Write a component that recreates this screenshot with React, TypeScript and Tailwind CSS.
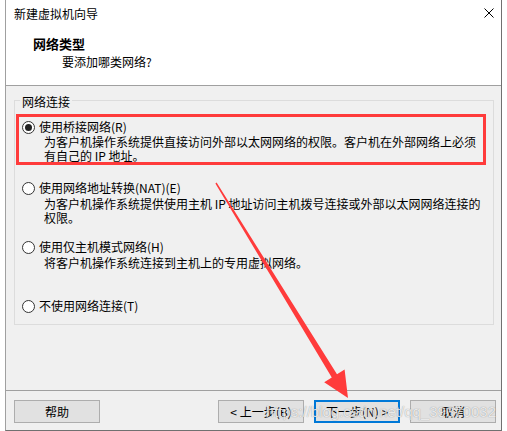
import React from 'react';

const Radio = ({ checked }: { checked?: boolean }) => (
  <span className="w-[13px] h-[13px] rounded-full border border-[#333333] bg-white flex items-center justify-center shrink-0">
    {checked && <span className="w-[7px] h-[7px] rounded-full bg-[#222222]" />}
  </span>
);

interface OptionProps {
  label: string;
  lines?: string[];
  checked?: boolean;
  tight?: boolean;
}

const Option = ({ label, lines, checked, tight }: OptionProps) => (
  <div>
    <div className="flex items-center h-[16px] leading-[16px]">
      <Radio checked={checked} />
      <span className="ml-[4px] whitespace-nowrap">{label}</span>
    </div>
    {lines && (
      <div className={tight ? 'pl-[22px] leading-[14px] whitespace-nowrap' : 'mt-[1px] pl-[22px] leading-[14px] whitespace-nowrap'}>
        {lines.map((l) => (
          <div key={l}>{l}</div>
        ))}
      </div>
    )}
  </div>
);

const WinButton = ({ children, primary }: { children: React.ReactNode; primary?: boolean }) => (
  <button
    className={
      primary
        ? 'w-[86px] h-[23px] bg-[#e1e1e1] border-2 border-[#0078d7] text-[12px] leading-[16px] text-black'
        : 'w-[86px] h-[23px] bg-[#e1e1e1] border border-[#adadad] text-[12px] leading-[16px] text-black'
    }
  >
    {children}
  </button>
);

export default function App() {
  return (
    <div className="relative w-[507px] h-[431px] bg-white overflow-hidden font-['Noto_Sans_CJK_SC',sans-serif] text-[12px] text-black">
      <div className="ml-[5px] w-[497px] h-[431px] flex flex-col bg-[#f0f0f0] border-l border-r border-b border-l-[#a0a0a0] border-r-[#707070] border-b-[#707070]">
        {/* en-tête */}
        <div className="h-[86px] bg-white border-b border-[#a0a0a0] shrink-0">
          <div className="h-[28px] flex items-center justify-between pl-[8px] pr-[7px]">
            <span className="leading-[16px]">新建虚拟机向导</span>
            <svg width="10" height="10" viewBox="0 0 10 10" className="mb-[2px]">
              <path d="M0.5 0.5 L9.5 9.5 M9.5 0.5 L0.5 9.5" stroke="#000" strokeWidth="1" fill="none" />
            </svg>
          </div>
          <div className="mt-[8px] pl-[27px] text-[13px] font-bold leading-[16px]">网络类型</div>
          <div className="mt-[2px] pl-[56px] leading-[16px]">要添加哪类网络?</div>
        </div>

        {/* contenu */}
        <div className="flex-1 flex flex-col">
          <fieldset className="mt-[4px] ml-[8px] w-[480px] border border-[#dcdcdc] pb-[10px]">
            <legend className="ml-[5px] px-[2px] pt-[4px] leading-[16px]">网络连接</legend>
            <div className="mt-[4px] ml-[1px] w-[470px] h-[51px] border-[3px] border-[#ff3b3b] pl-[3px] pt-[2px]">
              <Option
                checked
                tight
                label="使用桥接网络(R)"
                lines={[
                  '为客户机操作系统提供直接访问外部以太网网络的权限。客户机在外部网络上必须',
                  '有自己的 IP 地址。',
                ]}
              />
            </div>
            <div className="pl-[7px]">
              <div className="mt-[15px]">
                <Option
                  label="使用网络地址转换(NAT)(E)"
                  lines={[
                    '为客户机操作系统提供使用主机 IP 地址访问主机拨号连接或外部以太网网络连接的',
                    '权限。',
                  ]}
                />
              </div>
              <div className="mt-[14px]">
                <Option label="使用仅主机模式网络(H)" lines={['将客户机操作系统连接到主机上的专用虚拟网络。']} />
              </div>
              <div className="mt-[28px]">
                <Option label="不使用网络连接(T)" />
              </div>
            </div>
          </fieldset>
        </div>

        {/* boutons */}
        <div className="h-[40px] shrink-0 border-t border-[#a0a0a0] pt-[9px] pl-[8px] pr-[5px] flex items-start">
          <WinButton>帮助</WinButton>
          <div className="ml-auto flex gap-[10px]">
            <WinButton>&lt; 上一步(B)</WinButton>
            <WinButton primary>下一步(N) &gt;</WinButton>
            <WinButton>取消</WinButton>
          </div>
        </div>
      </div>

      {/* flèche rouge */}
      <svg className="absolute left-0 top-0 pointer-events-none" width="507" height="431" viewBox="0 0 507 431">
        <polygon
          points="216.6,182.6 337,374.3 344.6,369.6 348,398 324.2,382.2 331.8,377.5 215.4,183.4"
          fill="#ff3b3b"
        />
      </svg>

      {/* filigrane */}
      <div className="absolute right-[11px] top-[403px] text-[15px] leading-[18px] font-['Liberation_Sans',sans-serif] text-white/80 [text-shadow:0_0_1px_rgba(0,0,0,0.45)] pointer-events-none whitespace-nowrap">
        https://blog.csdn.net/qq_39370032
      </div>
    </div>
  );
}
